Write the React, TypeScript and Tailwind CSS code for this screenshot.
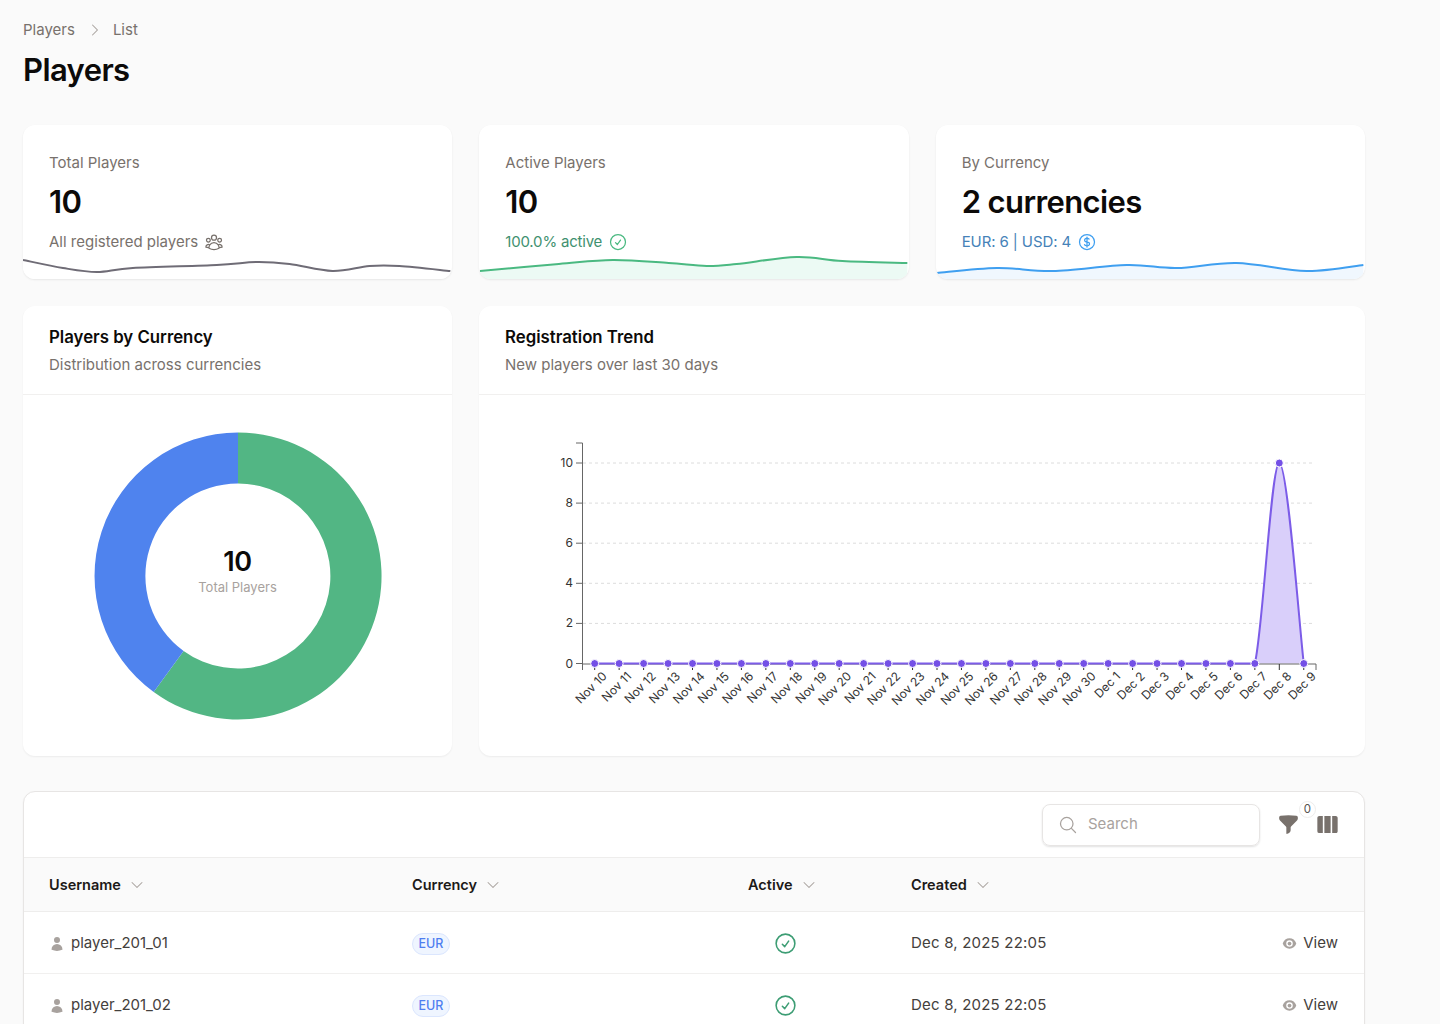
import React from 'react';
import {
  HiChevronDown,
  HiChevronRight,
  HiEye,
  HiFunnel,
  HiOutlineCheckCircle,
  HiOutlineCurrencyDollar,
  HiOutlineMagnifyingGlass,
  HiOutlineUserGroup,
  HiUser,
  HiViewColumns,
} from 'react-icons/hi2';

type Pt = [number, number];

// Catmull-Rom through the points, gives the same soft wave as the chart lib
const smooth = (pts: Pt[], maxY = Infinity) => {
  let d = `M${pts[0][0]} ${pts[0][1]}`;
  for (let i = 0; i < pts.length - 1; i++) {
    const p0 = pts[i - 1] || pts[i];
    const p1 = pts[i];
    const p2 = pts[i + 1];
    const p3 = pts[i + 2] || p2;
    const c1x = p1[0] + (p2[0] - p0[0]) / 6;
    const c1y = Math.min(p1[1] + (p2[1] - p0[1]) / 6, maxY);
    const c2x = p2[0] - (p3[0] - p1[0]) / 6;
    const c2y = Math.min(p2[1] - (p3[1] - p1[1]) / 6, maxY);
    d += ` C${c1x} ${c1y} ${c2x} ${c2y} ${p2[0]} ${p2[1]}`;
  }
  return d;
};

const Sparkline = ({ pts, stroke, fill }: { pts: Pt[]; stroke: string; fill: string }) => {
  const line = smooth(pts);
  const last = pts[pts.length - 1];
  return (
    <svg viewBox="0 0 430 30" className="absolute bottom-0 left-0 w-full h-[30px]" preserveAspectRatio="none">
      <path d={`${line} L${last[0]} 30 L${pts[0][0]} 30 Z`} fill={fill} />
      <path d={line} fill="none" stroke={stroke} strokeWidth="2" />
    </svg>
  );
};

const StatCard = ({
  label,
  value,
  children,
  pts,
  stroke,
  fill,
}: {
  label: string;
  value: string;
  children: React.ReactNode;
  pts: Pt[];
  stroke: string;
  fill: string;
}) => (
  <div className="relative h-[154px] bg-white rounded-xl shadow-[0_1px_2px_rgba(0,0,0,0.08)] overflow-hidden px-[26px] pt-[28px]">
    <div className="text-[15px] leading-[20px] text-[#78716c]">{label}</div>
    <div className="mt-[9px] text-[31px] leading-[40px] font-semibold tracking-[-0.6px] text-[#0c0a09]">{value}</div>
    <div className="mt-[10px] flex items-center gap-[6px] text-[15px] leading-[20px]">{children}</div>
    <Sparkline pts={pts} stroke={stroke} fill={fill} />
  </div>
);

const days = [
  'Nov 10', 'Nov 11', 'Nov 12', 'Nov 13', 'Nov 14', 'Nov 15', 'Nov 16', 'Nov 17', 'Nov 18', 'Nov 19',
  'Nov 20', 'Nov 21', 'Nov 22', 'Nov 23', 'Nov 24', 'Nov 25', 'Nov 26', 'Nov 27', 'Nov 28', 'Nov 29',
  'Nov 30', 'Dec 1', 'Dec 2', 'Dec 3', 'Dec 4', 'Dec 5', 'Dec 6', 'Dec 7', 'Dec 8', 'Dec 9',
];

const xAt = (i: number) => 594.7 + i * 24.45;
const yAt = (v: number) => 663.5 - v * 20.05;

const TrendChart = () => {
  const peak = days.map((_, i): Pt => [xAt(i), yAt(i === 28 ? 10 : 0)]);
  const line = smooth(peak, 663.5);
  return (
    <svg viewBox="479 395 886 361" className="w-full h-[361px] block">
      {[2, 4, 6, 8, 10].map((v) => (
        <line key={v} x1="583" x2="1315" y1={yAt(v)} y2={yAt(v)} stroke="#dcdcdc" strokeDasharray="3 3" />
      ))}
      <path d={`${line} L${xAt(29)} 663.5 L${xAt(0)} 663.5 Z`} fill="#d9cffa" />
      <path d="M582.5 443 H576 M582.5 443 V664 M582.5 664 H1316 V670 M582.5 664 V670" fill="none" stroke="#666" />
      {[0, 2, 4, 6, 8, 10].map((v) => (
        <g key={v}>
          <line x1="576" x2="582" y1={yAt(v)} y2={yAt(v)} stroke="#666" />
          <text x="573" y={yAt(v) + 4} textAnchor="end" fontSize="12" fill="#333">
            {v}
          </text>
        </g>
      ))}
      {days.map((d, i) => (
        <g key={d}>
          <line x1={xAt(i)} x2={xAt(i)} y1="664" y2="670" stroke="#333" />
          <text
            x={xAt(i) + 13}
            y="677"
            textAnchor="end"
            fontSize="12"
            fill="#333"
            transform={`rotate(-45 ${xAt(i) + 13} 677)`}
          >
            {d}
          </text>
        </g>
      ))}
      <path d={line} fill="none" stroke="#7c5ce8" strokeWidth="2" />
      {peak.map(([x, y]) => (
        <circle key={x} cx={x} cy={y} r="4" fill="#7450e6" stroke="#fff" strokeWidth="1" />
      ))}
    </svg>
  );
};

const ChartCard = ({ title, sub, children }: { title: string; sub: string; children: React.ReactNode }) => (
  <div className="h-[450px] bg-white rounded-xl shadow-[0_1px_2px_rgba(0,0,0,0.06)] overflow-hidden">
    <div className="h-[89px] border-b border-[#f1f0ef] px-[26px] pt-[20px]">
      <div className="text-[16.8px] leading-[22px] font-semibold text-[#0c0a09]">{title}</div>
      <div className="mt-[7px] text-[15px] leading-[20px] text-[#78716c]">{sub}</div>
    </div>
    {children}
  </div>
);

const SortHead = ({ label }: { label: string }) => (
  <div className="flex items-center gap-[8px] text-[14.5px] font-semibold text-[#1c1917] pl-[25px]">
    {label}
    <HiChevronDown className="w-[16px] h-[16px] text-[#a8a29e]" />
  </div>
);

const rows = ['player_201_01', 'player_201_02'];
const gridCols = 'grid grid-cols-[363px_336px_163px_1fr_auto] items-center';

export default function App() {
  return (
    <div
      className="h-[1024px] overflow-hidden bg-[#fafafa] pl-[23px] pr-[75px] pt-[20px]"
      style={{ fontFamily: 'Inter, "Liberation Sans", sans-serif' }}
    >
      {/* Breadcrumb + title */}
      <div className="flex items-center text-[15px] leading-[20px] text-[#78716c]">
        <span>Players</span>
        <HiChevronRight className="w-[16px] h-[16px] ml-[12px] mr-[10px] text-[#a8a29e]" />
        <span>List</span>
      </div>
      <h1 className="mt-[10px] text-[31px] leading-[40px] font-semibold tracking-[-0.6px] text-[#0c0a09]">Players</h1>

      {/* Stat cards */}
      <div className="mt-[35px] grid grid-cols-3 gap-[27px]">
        <StatCard
          label="Total Players"
          value="10"
          stroke="#6f6c76"
          fill="#ffffff"
          pts={[[0, 11], [40, 19], [74, 23], [110, 19], [194, 16], [234, 13], [267, 15], [310, 22], [347, 17], [377, 17], [428, 22]]}
        >
          <span className="text-[#78716c]">All registered players</span>
          <HiOutlineUserGroup className="w-[20px] h-[20px] text-[#78716c]" />
        </StatCard>
        <StatCard
          label="Active Players"
          value="10"
          stroke="#4ab981"
          fill="#ecfaf4"
          pts={[[1, 22], [80, 15], [134, 11], [190, 14], [228, 17], [258, 15], [318, 8], [364, 12], [429, 14]]}
        >
          <span className="text-[#3f9170] tracking-[-0.2px]">100.0% active</span>
          <HiOutlineCheckCircle className="w-[20px] h-[20px] text-[#4ab981]" />
        </StatCard>
        <StatCard
          label="By Currency"
          value="2 currencies"
          stroke="#3f9ff0"
          fill="#f0f7fe"
          pts={[[1, 24], [61, 19], [117, 22], [191, 16], [241, 19], [301, 14], [371, 22], [428, 16]]}
        >
          <span className="text-[#4682b8] tracking-[-0.1px]">EUR: 6 | USD: 4</span>
          <HiOutlineCurrencyDollar className="w-[20px] h-[20px] text-[#3f9ff0]" />
        </StatCard>
      </div>

      {/* Charts */}
      <div className="mt-[27px] grid grid-cols-[429px_1fr] gap-[27px]">
        <ChartCard title="Players by Currency" sub="Distribution across currencies">
          <div className="relative h-[361px] flex items-center justify-center">
            <svg viewBox="0 0 288 288" className="w-[288px] h-[288px]">
              <path
                d="M144 0.5 A143.5 143.5 0 1 1 59.7 260.1 L89.6 218.9 A92.5 92.5 0 1 0 144 51.5 Z"
                fill="#52b684"
              />
              <path
                d="M144 0.5 A143.5 143.5 0 0 0 59.7 260.1 L89.6 218.9 A92.5 92.5 0 0 1 144 51.5 Z"
                fill="#4f83ee"
              />
            </svg>
            <div className="absolute inset-0 flex flex-col items-center justify-center">
              <div className="text-[27px] leading-[34px] font-semibold tracking-[-0.4px] text-[#0c0a09] mt-[-10px]">10</div>
              <div className="text-[13px] leading-[18px] text-[#a8a29e] mt-[-1px]">Total Players</div>
            </div>
          </div>
        </ChartCard>
        <ChartCard title="Registration Trend" sub="New players over last 30 days">
          <TrendChart />
        </ChartCard>
      </div>

      {/* Table */}
      <div className="mt-[35px] bg-white rounded-t-xl border border-[#e7e5e4] shadow-[0_1px_2px_rgba(0,0,0,0.05)]">
        <div className="h-[65px] flex items-center justify-end pr-[24px] relative">
          <div className="w-[218px] h-[42px] rounded-lg border border-[#e7e5e4] shadow-[0_1px_2px_rgba(0,0,0,0.12)] flex items-center gap-[10px] pl-[15px] text-[15px] text-[#a8a29e]">
            <HiOutlineMagnifyingGlass className="w-[20px] h-[20px] text-[#a8a29e]" />
            Search
          </div>
          <HiFunnel className="ml-[17px] w-[23px] h-[23px] text-[#78716c]" />
          <HiViewColumns className="ml-[15px] w-[25px] h-[25px] text-[#78716c]" />
          <span className="absolute right-[48px] top-[9px] w-[17px] h-[17px] rounded-full bg-white border border-[#eeedec] flex items-center justify-center text-[11.5px] text-[#57534e]">
            0
          </span>
        </div>
        <div className={`${gridCols} h-[55px] bg-[#fafafa] border-y border-[#eeedec]`}>
          <SortHead label="Username" />
          <SortHead label="Currency" />
          <SortHead label="Active" />
          <SortHead label="Created" />
          <div />
        </div>
        {rows.map((name) => (
          <div key={name} className={`${gridCols} h-[62px] pt-[2px] border-b border-[#f1f0ef] text-[15px] text-[#44403c]`}>
            <div className="flex items-center gap-[6px] pl-[25px]">
              <HiUser className="w-[16px] h-[16px] text-[#a8a29e]" />
              {name}
            </div>
            <div className="pl-[25px]">
              <span className="inline-flex h-[22px] items-center rounded-full bg-[#eff5ff] border border-[#dbe6fe] px-[5.5px] text-[12.5px] font-medium text-[#4f7ff0]">
                EUR
              </span>
            </div>
            <div className="pl-[25px]">
              <div className="w-[74px] flex justify-center">
                <HiOutlineCheckCircle className="w-[25px] h-[25px] text-[#3d9d74]" />
              </div>
            </div>
            <div className="pl-[25px] tracking-[0.2px]">Dec 8, 2025 22:05</div>
            <div className="flex items-center gap-[6px] pr-[26px]">
              <HiEye className="w-[15px] h-[15px] text-[#a8a29e]" />
              View
            </div>
          </div>
        ))}
      </div>
    </div>
  );
}
